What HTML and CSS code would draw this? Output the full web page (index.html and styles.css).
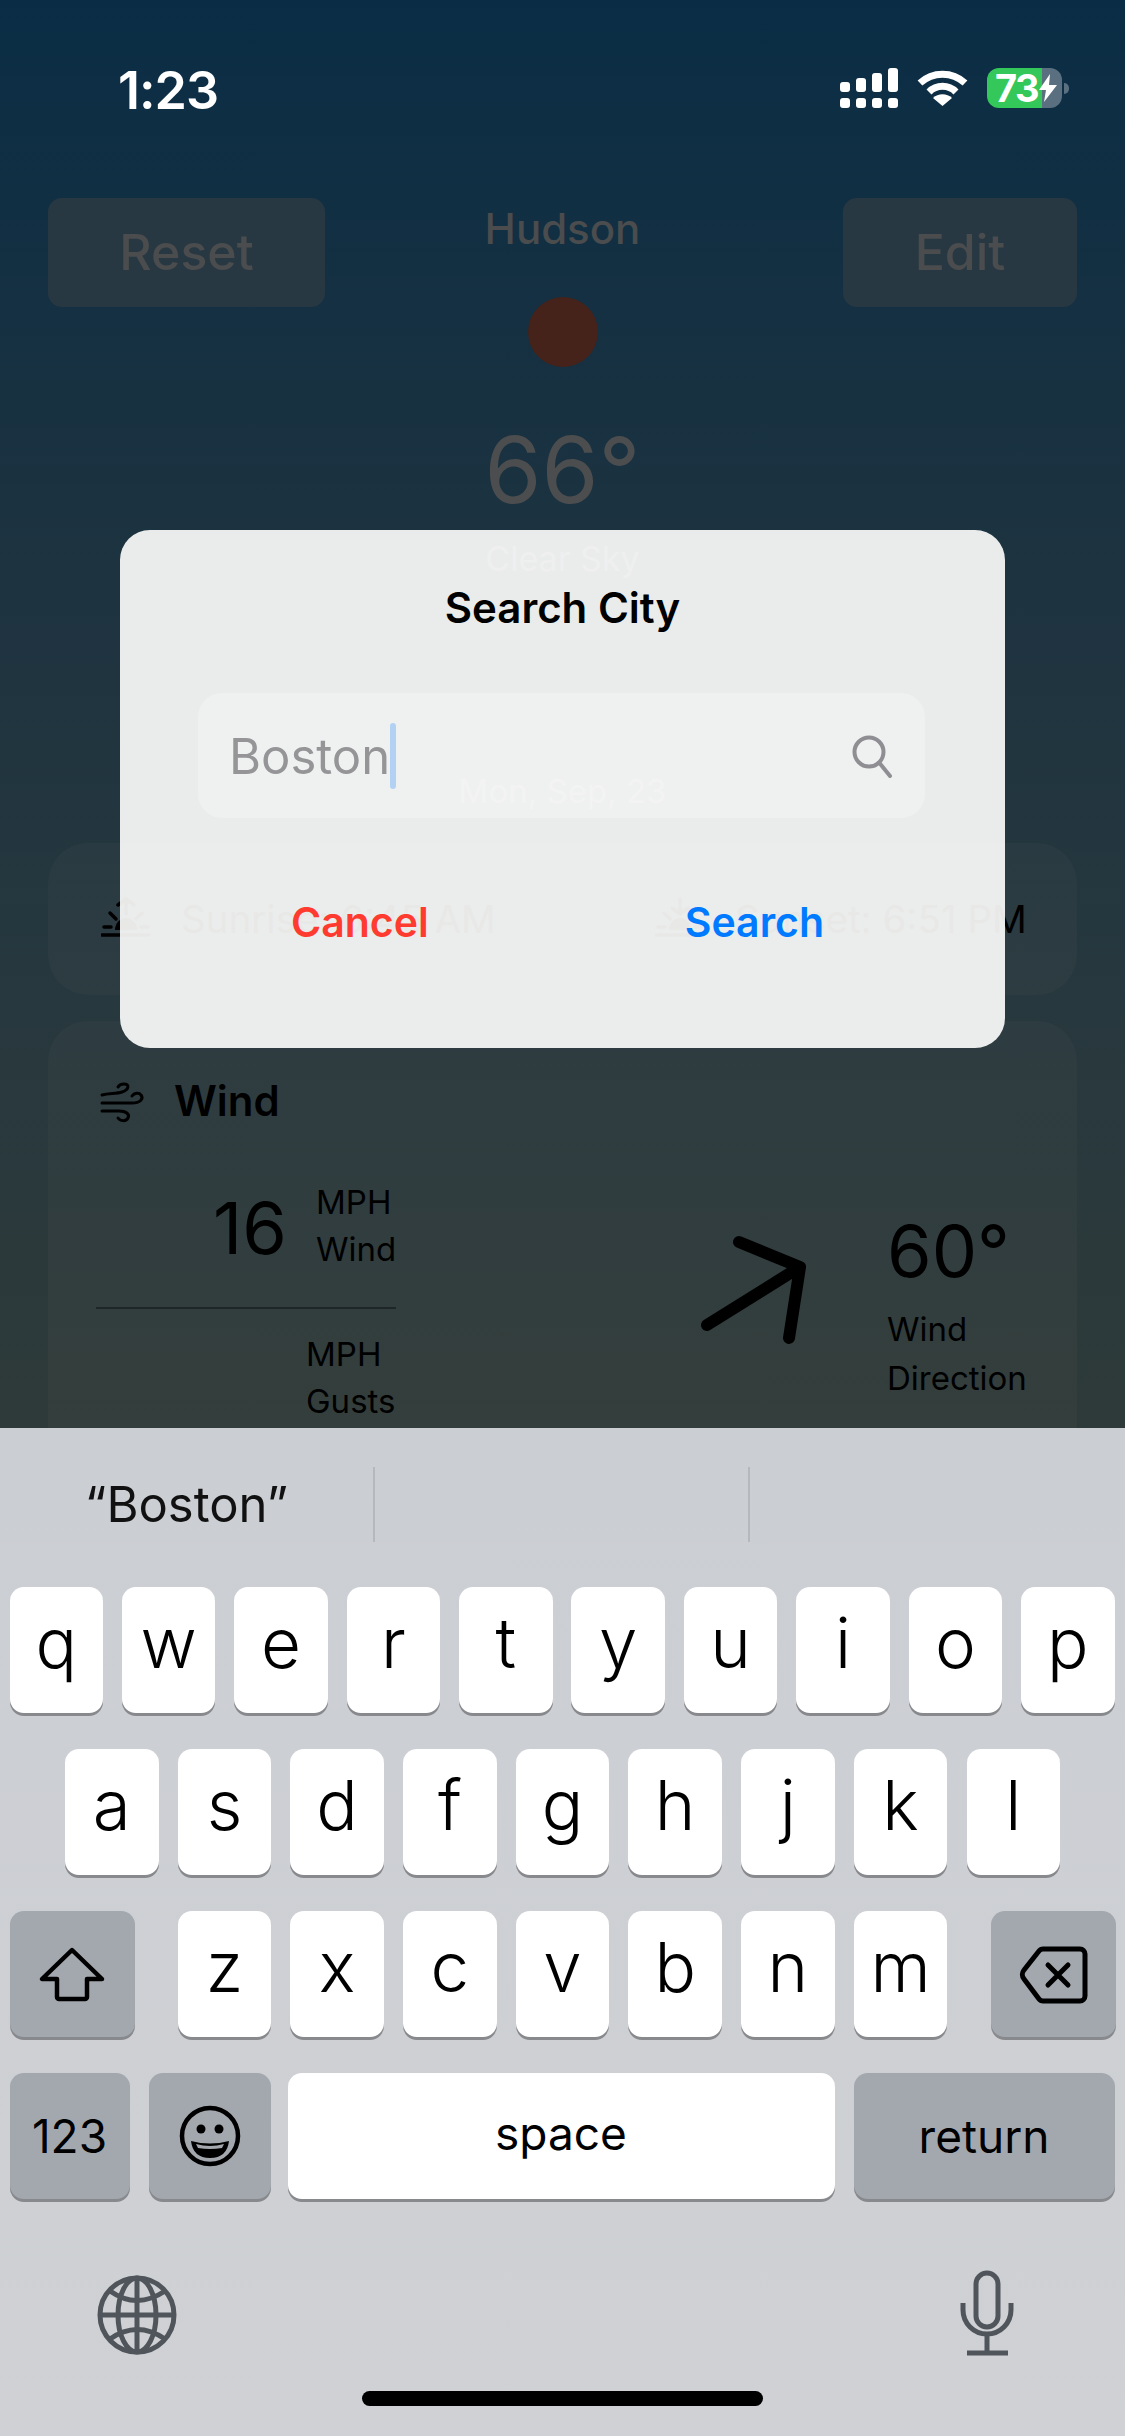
FILE: index.html
```html
<!DOCTYPE html>
<html lang="en">
<head>
    <meta charset="UTF-8">
    <meta name="viewport" content="width=device-width, initial-scale=1.0">
    <title>Search City</title>
    <link rel="stylesheet" href="styles.css">
</head>
<body>
<div class="screen">
    <div class="scene">
        <div class="status">
            <span class="clock">1:23</span>
            <div class="status-icons">
                <svg class="signal" width="58" height="41" viewBox="0 0 58 41" fill="#fff">
                    <rect x="0" y="14" width="10" height="10" rx="3"/>
                    <rect x="16" y="10" width="10" height="14" rx="3"/>
                    <rect x="32" y="5" width="10" height="19" rx="3"/>
                    <rect x="48" y="0" width="10" height="24" rx="3"/>
                    <rect x="0" y="30" width="10" height="10" rx="3"/>
                    <rect x="16" y="30" width="10" height="10" rx="3"/>
                    <rect x="32" y="30" width="10" height="10" rx="3"/>
                    <rect x="48" y="30" width="10" height="10" rx="3"/>
                </svg>
                <svg class="wifi" width="51" height="37" viewBox="0 0 51 37" fill="none" stroke="#fff">
                    <path d="M3 13 A33 33 0 0 1 48 13" stroke-width="7"/>
                    <path d="M12 22 A19 19 0 0 1 39 22" stroke-width="7"/>
                    <path d="M25.5 36 L16 28 A14 14 0 0 1 35 28 Z" fill="#fff" stroke="none"/>
                </svg>
                <div class="battery">
                    <span>73</span>
                    <svg width="18" height="28" viewBox="0 0 18 28" fill="#fff"><path d="M11 0 L0 16 H7 L5 28 L18 11 H10 Z"/></svg>
                </div>
                <div class="battery-nub"></div>
            </div>
        </div>

        <div class="hero">
            <div class="ghost-btn reset">Reset</div>
            <div class="hero-center">
                <div class="city">Hudson</div>
                <div class="sun"></div>
                <div class="temp">66°</div>
                <div class="sky">Clear Sky</div>
                <div class="date">Mon, Sep, 23</div>
            </div>
            <div class="ghost-btn edit">Edit</div>
        </div>

        <div class="card sun-card">
            <div class="sun-item sunrise">
                <svg width="50" height="40" viewBox="0 0 50 40" fill="none" stroke="#000" stroke-width="3.5" stroke-linecap="round" stroke-linejoin="round">
                    <path d="M1 38 H48"/>
                    <path d="M14 33 A11 12 0 0 1 36 33 Z" fill="#000" stroke="none"/>
                    <path d="M9 16 L15 22 M41 16 L35 22 M3 30 H10 M40 30 H47"/>
                    <path d="M25 17 V2 M17 8 L25 2 L33 8"/>
                </svg>
                <span>Sunrise: 6:45 AM</span>
            </div>
            <div class="sun-item sunset">
                <svg width="50" height="40" viewBox="0 0 50 40" fill="none" stroke="#000" stroke-width="3.5" stroke-linecap="round" stroke-linejoin="round">
                    <path d="M1 38 H48"/>
                    <path d="M14 33 A11 12 0 0 1 36 33 Z" fill="#000" stroke="none"/>
                    <path d="M9 16 L15 22 M41 16 L35 22 M3 30 H10 M40 30 H47"/>
                    <path d="M25 2 V17 M17 11 L25 17 L33 11"/>
                </svg>
                <span>Sunset: 6:51 PM</span>
            </div>
        </div>

        <div class="card wind-card">
            <div class="wind-title">
                <svg width="70" height="60" viewBox="0 0 70 60" fill="none" stroke="#000" stroke-width="3" stroke-linecap="round">
                    <path d="M17 24 C24 22 31 23 37 21 C44 19 45 13 39 13 C36 13 34 14 33 16"/>
                    <path d="M17 32 H47 C55 32 59 28 56 24 C54 21 49 22 47 25"/>
                    <path d="M17 40 H34 C41 40 45 43 43 47 C41 51 35 50 33 47"/>
                </svg>
                <span>Wind</span>
            </div>
            <div class="wind-body">
                <div class="wind-speeds">
                    <div class="speed-row">
                        <span class="speed-value">16</span>
                        <div class="speed-label">MPH<br>Wind</div>
                    </div>
                    <div class="speed-row gusts">
                        <div class="speed-label">MPH<br>Gusts</div>
                    </div>
                </div>
                <div class="wind-dir">
                    <svg width="120" height="115" viewBox="0 0 120 115" fill="none" stroke="#000" stroke-width="12" stroke-linecap="round" stroke-linejoin="round">
                        <path d="M12 93 L105 35 M44 10 L105 35 L94 106"/>
                    </svg>
                    <div class="dir-text">
                        <div class="dir-value">60°</div>
                        <div class="dir-label">Wind<br>Direction</div>
                    </div>
                </div>
            </div>
        </div>
    </div>

    <div class="dialog">
        <div class="dialog-title">Search City</div>
        <div class="search-field">
            <span class="search-text">Boston</span><span class="caret"></span>
            <svg class="search-icon" width="44" height="44" viewBox="0 0 44 44" fill="none" stroke="#8e8e93" stroke-width="4" stroke-linecap="round">
                <circle cx="19" cy="18" r="14.5"/>
                <path d="M29.5 29 L40 42"/>
            </svg>
        </div>
        <div class="dialog-actions">
            <span class="cancel">Cancel</span>
            <span class="confirm">Search</span>
        </div>
    </div>

    <div class="keyboard">
        <div class="suggestions">
            <div class="suggestion">“Boston”</div>
            <div class="suggestion"></div>
            <div class="suggestion"></div>
        </div>
        <div class="key-row row-one">
            <div class="key">q</div><div class="key">w</div><div class="key">e</div><div class="key">r</div><div class="key">t</div><div class="key">y</div><div class="key">u</div><div class="key">i</div><div class="key">o</div><div class="key">p</div>
        </div>
        <div class="key-row row-two">
            <div class="key">a</div><div class="key">s</div><div class="key">d</div><div class="key">f</div><div class="key">g</div><div class="key">h</div><div class="key">j</div><div class="key">k</div><div class="key">l</div>
        </div>
        <div class="key-row row-three">
            <div class="key dark shift">
                <svg width="72" height="62" viewBox="0 0 72 62" fill="none" stroke="#000" stroke-width="4.5" stroke-linejoin="round">
                    <path d="M36 7 L6 36 H21 V54 a2 2 0 0 0 2 2 H49 a2 2 0 0 0 2 -2 V36 H66 Z"/>
                </svg>
            </div>
            <div class="letters">
                <div class="key">z</div><div class="key">x</div><div class="key">c</div><div class="key">v</div><div class="key">b</div><div class="key">n</div><div class="key">m</div>
            </div>
            <div class="key dark backspace">
                <svg width="75" height="66" viewBox="0 0 75 66" fill="none" stroke="#000" stroke-width="5" stroke-linecap="round" stroke-linejoin="round">
                    <path d="M27 8 H64 a5 5 0 0 1 5 5 V55 a5 5 0 0 1 -5 5 H27 a5 5 0 0 1 -4 -2 L8 38 a7 7 0 0 1 0 -9 L23 10 a5 5 0 0 1 4 -2 Z"/>
                    <path d="M32 24 L52 44 M52 24 L32 44"/>
                </svg>
            </div>
        </div>
        <div class="key-row row-four">
            <div class="key dark small numbers">123</div>
            <div class="key dark emoji">
                <svg width="70" height="70" viewBox="0 0 70 70">
                    <circle cx="35" cy="35" r="28" fill="none" stroke="#000" stroke-width="4.5"/>
                    <circle cx="26" cy="28" r="4.5"/>
                    <circle cx="44" cy="28" r="4.5"/>
                    <path d="M16 40 Q35 45 54 40 Q52 57 35 57 Q18 57 16 40 Z"/>
                    <path d="M21 43 Q35 47 49 43 L47 47 Q35 49 23 47 Z" fill="#a4a7ae"/>
                </svg>
            </div>
            <div class="key small space">space</div>
            <div class="key dark small return">return</div>
        </div>
        <div class="key-tools">
            <svg class="globe" width="80" height="80" viewBox="0 0 80 80" fill="none" stroke="#50555c" stroke-width="5">
                <circle cx="40" cy="40" r="37"/>
                <ellipse cx="40" cy="40" rx="19" ry="37"/>
                <path d="M40 3 V77 M3 40 H77"/>
                <path d="M13 16 Q40 35 68 16 M13 64 Q40 45 68 64"/>
            </svg>
            <svg class="mic" width="66" height="96" viewBox="0 0 66 96" fill="none" stroke="#50555c" stroke-width="5">
                <rect x="21" y="8" width="22" height="54" rx="11"/>
                <path d="M8 38 V45 a24 24 0 0 0 48 0 V38"/>
                <path d="M32 70 V86 M12 88 H53"/>
            </svg>
        </div>
        <div class="home-bar"></div>
    </div>
</div>
</body>
</html>
```

FILE: styles.css
```css
* {
    box-sizing: border-box;
}
html, body {
    margin: 0;
    padding: 0;
}
body {
    font-family: "Inter", "Liberation Sans", sans-serif;
}
.screen {
    position: relative;
    width: 1125px;
    height: 2436px;
    display: flex;
    flex-direction: column;
    overflow: hidden;
}

/* dimmed weather page behind the dialog */
.scene {
    height: 1428px;
    overflow: hidden;
    background: linear-gradient(180deg, #0a2d45 0%, #1b3240 35%, #27383e 70%, #2e3a39 100%);
}
.status {
    display: flex;
    justify-content: space-between;
    align-items: flex-start;
    height: 198px;
    padding: 64px 56px 0 118px;
}
.clock {
    color: #fff;
    font-size: 52px;
    font-weight: 600;
    line-height: 54px;
    letter-spacing: -1px;
}
.status-icons {
    display: flex;
    align-items: flex-start;
    margin-top: 4px;
}
.signal {
    margin-right: 19px;
}
.wifi {
    margin: 2px 19px 0 0;
}
.battery {
    display: flex;
    align-items: center;
    width: 75px;
    height: 40px;
    padding-left: 8px;
    border-radius: 12px;
    background: linear-gradient(90deg, #34c759 73%, #5a7080 73%);
    color: #fff;
    font-size: 38px;
    font-weight: 700;
    letter-spacing: -1.5px;
}
.battery svg {
    margin-left: 1px;
}
.battery-nub {
    width: 5px;
    height: 11px;
    margin: 15px 0 0 2px;
    border-radius: 0 5px 5px 0;
    background: #5a7080;
}
.hero {
    display: grid;
    grid-template-columns: 1fr auto 1fr;
    height: 645px;
    padding: 0 48px;
}
.ghost-btn {
    height: 109px;
    border-radius: 14px;
    background: #273843;
    color: #4a4c4d;
    font-size: 50px;
    font-weight: 500;
    line-height: 109px;
    text-align: center;
}
.reset {
    width: 277px;
    justify-self: start;
}
.edit {
    width: 234px;
    justify-self: end;
}
.hero-center {
    display: flex;
    flex-direction: column;
    align-items: center;
    padding-top: 5px;
}
.city {
    color: #4a4c4d;
    font-size: 42px;
    font-weight: 500;
    line-height: 52px;
}
.sun {
    width: 70px;
    height: 70px;
    margin: 42px 0 0 2px;
    border-radius: 50%;
    background: #45221a;
}
.temp {
    margin-top: 47px;
    color: #4c4d4e;
    font-size: 92px;
    font-weight: 400;
    line-height: 112px;
}
.sky {
    margin-top: 10px;
    color: #555b5e;
    font-size: 34px;
    line-height: 46px;
}
.date {
    margin-top: 188px;
    color: #555b5e;
    font-size: 33px;
    line-height: 42px;
}
.card {
    margin: 0 48px;
    border-radius: 40px;
    background: rgba(255, 190, 150, 0.03);
}
.sun-card {
    display: flex;
    height: 152px;
}
.sun-item {
    display: flex;
    align-items: center;
    gap: 30px;
    color: #000;
    font-size: 38.5px;
    line-height: 48px;
}
.sun-item svg {
    flex-shrink: 0;
    margin-top: -4px;
}
.sunrise {
    width: 607px;
    padding-left: 53px;
}
.wind-card {
    height: 500px;
    margin-top: 26px;
    padding-top: 50px;
}
.wind-title {
    display: flex;
    align-items: center;
    color: #000;
    font-size: 42px;
    font-weight: 600;
    line-height: 52px;
    padding-left: 37px;
}
.wind-title svg {
    margin-right: 19px;
}
.wind-body {
    display: flex;
    padding: 38px 0 0 48px;
}
.wind-speeds {
    width: 300px;
    flex-shrink: 0;
}
.speed-row {
    display: flex;
    justify-content: flex-end;
    align-items: flex-start;
    height: 140px;
    border-bottom: 2px solid #1f2627;
    gap: 29px;
}
.speed-row.gusts {
    height: auto;
    padding-top: 22px;
    border-bottom: 0;
}
.speed-value {
    margin-top: 19px;
    color: #000;
    font-size: 72px;
    font-weight: 400;
    line-height: 80px;
}
.speed-label {
    width: 80px;
    margin-top: 10px;
    color: #000;
    font-size: 33px;
    line-height: 47px;
    white-space: nowrap;
}
.gusts .speed-label {
    width: 90px;
    margin-top: 0;
}
.wind-dir {
    display: flex;
    align-items: flex-start;
    margin-left: 299px;
}
.wind-dir svg {
    margin-top: 63px;
}
.dir-text {
    margin-left: 72px;
}
.dir-value {
    margin-top: 37px;
    color: #000;
    font-size: 72px;
    font-weight: 400;
    line-height: 90px;
}
.dir-label {
    margin-top: 9px;
    color: #000;
    font-size: 33px;
    line-height: 49px;
    white-space: nowrap;
}

/* dialog */
.dialog {
    position: absolute;
    top: 530px;
    left: 120px;
    width: 885px;
    height: 518px;
    display: flex;
    flex-direction: column;
    padding-top: 52px;
    border-radius: 30px;
    background: rgba(252, 252, 251, 0.92);
}
.dialog-title {
    color: #000;
    font-size: 42px;
    font-weight: 600;
    line-height: 52px;
    text-align: center;
}
.search-field {
    display: flex;
    align-items: center;
    width: 727px;
    height: 125px;
    margin: 59px 0 0 78px;
    padding: 0 31px;
    border-radius: 24px;
    background: rgba(255, 255, 255, 0.25);
}
.search-text {
    padding-top: 2px;
    color: #959598;
    font-size: 49px;
    line-height: 60px;
}
.caret {
    width: 6px;
    height: 66px;
    border-radius: 3px;
    background: #b3d2f3;
}
.search-icon {
    margin-left: auto;
}
.dialog-actions {
    display: flex;
    justify-content: space-between;
    margin-top: 78px;
    padding: 0 181px 0 171px;
    font-size: 41px;
    font-weight: 600;
    line-height: 52px;
}
.cancel {
    color: #ff3b30;
}
.confirm {
    color: #007aff;
}

/* keyboard */
.keyboard {
    flex: 1;
    background: linear-gradient(180deg, #cbced3 0%, #cfd1d4 100%);
}
.suggestions {
    display: flex;
    height: 159px;
    padding-top: 39px;
    align-items: flex-start;
}
.suggestion {
    width: 375px;
    height: 75px;
    border-right: 2px solid #b5b8bd;
    color: #111;
    font-size: 49px;
    line-height: 75px;
    text-align: center;
}
.suggestion:last-child {
    border-right: 0;
}
.key-row {
    display: flex;
    gap: 18.9px;
    padding: 0 9.5px;
    margin-bottom: 36px;
}
.row-two {
    gap: 19.2px;
    padding-left: 65px;
}
.row-three {
    justify-content: space-between;
}
.letters {
    display: flex;
    gap: 19.2px;
}
.key {
    display: flex;
    align-items: center;
    justify-content: center;
    flex-shrink: 0;
    width: 93.5px;
    height: 126px;
    padding-bottom: 14px;
    border-radius: 14px;
    background: #fff;
    box-shadow: 0 3px 0 #88898d;
    color: #000;
    font-size: 69px;
    font-weight: 300;
}
.key.dark {
    background: #a3a8af;
}
.key.small {
    font-size: 46px;
    font-weight: 400;
    padding-bottom: 0;
}
.key.space {
    padding-bottom: 6px;
}
.shift, .backspace, .emoji {
    padding-bottom: 0;
}
.shift {
    width: 125px;
}
.backspace {
    width: 125px;
}
.row-four {
    gap: 19px;
}
.numbers {
    width: 120px;
}
.emoji {
    width: 122px;
    margin-right: -2px;
}
.space {
    width: 547px;
}
.return {
    width: 261px;
}
.key-tools {
    display: flex;
    justify-content: space-between;
    align-items: flex-start;
    margin-top: 66px;
    padding: 0 104px 0 97px;
}
.globe {
    margin-top: 10px;
}
.home-bar {
    width: 401px;
    height: 15px;
    margin: 30px auto 0;
    border-radius: 8px;
    background: #000;
}
```
